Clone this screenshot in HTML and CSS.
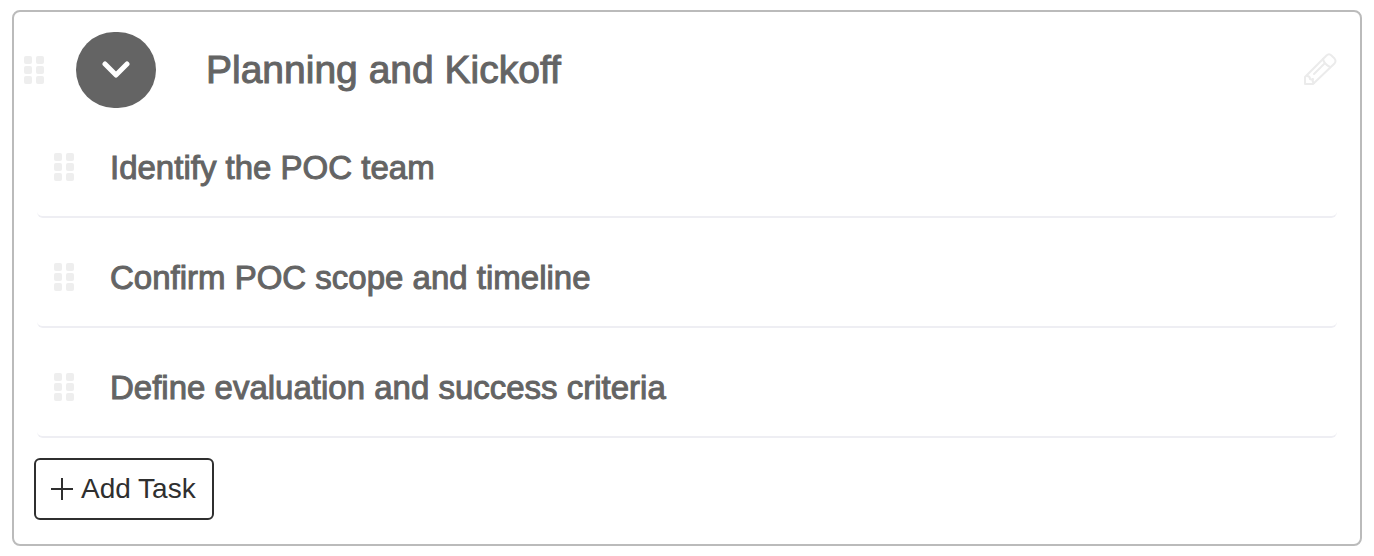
FILE: index.html
```html
<!DOCTYPE html>
<html lang="en">
<head>
    <meta charset="UTF-8">
    <meta name="viewport" content="width=device-width, initial-scale=1.0">
    <title>Planning and Kickoff</title>
    <link rel="stylesheet" href="styles.css">
</head>
<body>
    <!-- shared drag handle -->
    <svg class="defs" aria-hidden="true">
        <symbol id="grip" viewBox="0 0 20 28">
            <rect x="0" y="0" width="8" height="8" rx="2"/>
            <rect x="12" y="0" width="8" height="8" rx="2"/>
            <rect x="0" y="10" width="8" height="8" rx="2"/>
            <rect x="12" y="10" width="8" height="8" rx="2"/>
            <rect x="0" y="20" width="8" height="8" rx="2"/>
            <rect x="12" y="20" width="8" height="8" rx="2"/>
        </symbol>
    </svg>
    <section class="card">
        <header class="card-header">
            <svg class="grip"><use href="#grip"/></svg>
            <button class="toggle" type="button" aria-label="Collapse">
                <svg width="28" height="18" viewBox="0 0 28 18"><path d="M3 3l11 11L25 3"/></svg>
            </button>
            <h2>Planning and Kickoff</h2>
            <button class="edit" type="button" aria-label="Edit">
                <svg width="34" height="34" viewBox="0 0 34 34">
                    <path d="M2 31V24L23.500 2.500Q26 0 28.500 2.500L31.500 5.500Q33.500 8 31.500 10.500L10 31Z"/>
                    <path d="M20 6q1 5 7 8M4 23q3 0 3 3 1 1 3 0-1 3 1 4M11 21L21.500 10.500"/>
                </svg>
            </button>
        </header>
        <ul class="tasks">
            <li><svg class="grip"><use href="#grip"/></svg><span>Identify the POC team</span></li>
            <li><svg class="grip"><use href="#grip"/></svg><span>Confirm POC scope and timeline</span></li>
            <li><svg class="grip"><use href="#grip"/></svg><span>Define evaluation and success criteria</span></li>
        </ul>
        <button class="add" type="button">
            <svg width="22" height="22" viewBox="0 0 22 22"><path d="M11 0v22M0 11h22"/></svg>
            Add Task
        </button>
    </section>
</body>
</html>
```
FILE: styles.css
```css
*{
    margin: 0;
    padding: 0;
    box-sizing: border-box;
}
body{
    padding: 10px 12px;
    background: #fff;
    color: #646464;
    font-family: "Liberation Sans", Arial, sans-serif;
}
button{
    font-family: inherit;
    cursor: pointer;
}
svg{
    display: block;
    flex: none;
}
.defs{
    display: none;
}
.card{
    border: 2px solid #bbb;
    border-radius: 8px;
    padding: 20px 20px 24px;
}
.card-header{
    display: flex;
    align-items: center;
    margin-left: -10px;
}
.grip{
    width: 20px;
    height: 28px;
    fill: #eee;
    cursor: move;
}
.toggle{
    display: flex;
    align-items: center;
    justify-content: center;
    width: 80px;
    height: 76px;
    margin: 0 50px 0 32px;
    border: 0;
    border-radius: 38px;
    background: #646464;
}
.toggle path{
    fill: none;
    stroke: #fff;
    stroke-width: 5;
    stroke-linecap: round;
    stroke-linejoin: round;
}
h2{
    font-size: 39px;
    font-weight: 400;
    line-height: 44px;
    -webkit-text-stroke: 1px #646464;
}
.edit{
    margin-left: auto;
    margin-right: 3px;
    border: 0;
    background: none;
}
.edit path{
    fill: none;
    stroke: #ebebeb;
    stroke-width: 2;
    stroke-linejoin: round;
    stroke-linecap: round;
}
.tasks{
    list-style: none;
    margin: 0 3px;
}
.tasks li{
    display: flex;
    align-items: center;
    gap: 36px;
    height: 110px;
    padding: 10px 17px 0;
    border-bottom: 2px solid #eeeef3;
    border-radius: 6px;
    font-size: 33px;
    line-height: 40px;
    -webkit-text-stroke: 1px #646464;
}
.tasks span{
    padding-top: 2px;
}
.add{
    display: flex;
    align-items: center;
    gap: 8px;
    height: 62px;
    margin-top: 20px;
    padding: 0 16px 0 15px;
    border: 2px solid #2f2f2f;
    border-radius: 6px;
    background: #fff;
    color: #2f2f2f;
    font-size: 28px;
}
.add path{
    stroke: #2f2f2f;
    stroke-width: 2;
}
```
